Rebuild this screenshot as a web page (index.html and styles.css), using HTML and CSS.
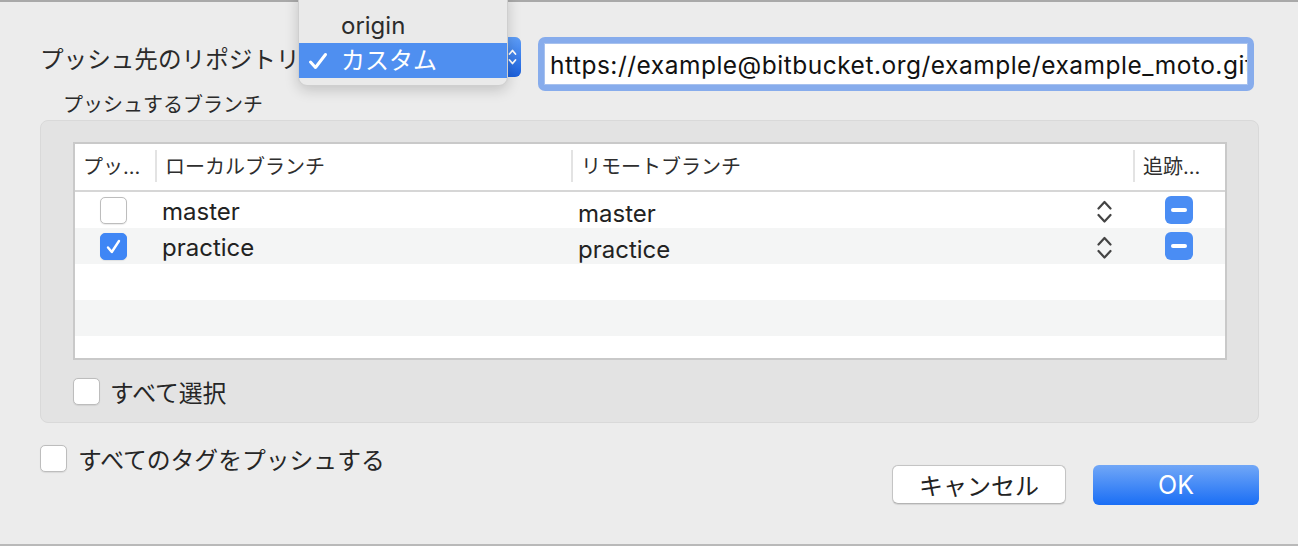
FILE: index.html
```html
<!DOCTYPE html>
<html lang="ja">
<head>
<meta charset="utf-8">
<title>プッシュ</title>
<link rel="stylesheet" href="styles.css">
</head>
<body>
<div class="window">
  <div class="top-row">
    <div class="repo-label">プッシュ先のリポジトリ:</div>
    <div class="popup-btn">
      <div class="popup-arrow">
        <svg width="9" height="18" viewBox="0 0 9 18"><path d="M1.5 6 L4.5 2.5 L7.5 6 M1.5 12 L4.5 15.5 L7.5 12" fill="none" stroke="#fff" stroke-width="1.8" stroke-linecap="round" stroke-linejoin="round"/></svg>
      </div>
    </div>
    <div class="url-ring">
      <div class="url-field">https://example@bitbucket.org/example/example_moto.git</div>
    </div>
  </div>

  <div class="menu">
    <div class="menu-item">origin</div>
    <div class="menu-item selected">
      <svg class="menu-check" width="20" height="20" viewBox="0 0 20 20"><path d="M2.5 11 L7.5 16.5 L17.5 3.5" fill="none" stroke="#fff" stroke-width="3" stroke-linecap="round" stroke-linejoin="round"/></svg>
      カスタム
    </div>
  </div>

  <div class="group-label">プッシュするブランチ</div>
  <div class="group">
    <div class="table">
      <div class="thead">
        <div class="th first">プッ…</div>
        <div class="th">ローカルブランチ</div>
        <div class="th">リモートブランチ</div>
        <div class="th">追跡…</div>
      </div>
      <div class="tbody">
        <div class="tr">
          <div class="td c1"><span class="cb"></span></div>
          <div class="td c2"><span class="txt">master</span></div>
          <div class="td c3"><span class="txt low">master</span>
            <svg class="stepper" width="15" height="25" viewBox="0 0 15 25"><path d="M1.5 9.5 L7.5 3 L13.5 9.5 M1.5 16 L7.5 22.5 L13.5 16" fill="none" stroke="#444" stroke-width="2.2" stroke-linecap="round" stroke-linejoin="round"/></svg>
          </div>
          <div class="td c4"><span class="minus"><span class="bar"></span></span></div>
        </div>
        <div class="tr alt">
          <div class="td c1"><span class="cb on"><svg width="25" height="25" viewBox="0 0 25 25"><path d="M7 13.5 L10.8 18 L18 7" fill="none" stroke="#fff" stroke-width="2.4" stroke-linecap="round" stroke-linejoin="round"/></svg></span></div>
          <div class="td c2"><span class="txt">practice</span></div>
          <div class="td c3"><span class="txt low">practice</span>
            <svg class="stepper" width="15" height="25" viewBox="0 0 15 25"><path d="M1.5 9.5 L7.5 3 L13.5 9.5 M1.5 16 L7.5 22.5 L13.5 16" fill="none" stroke="#444" stroke-width="2.2" stroke-linecap="round" stroke-linejoin="round"/></svg>
          </div>
          <div class="td c4"><span class="minus"><span class="bar"></span></span></div>
        </div>
        <div class="tr"></div>
        <div class="tr alt"></div>
        <div class="tr"></div>
      </div>
    </div>
    <div class="check-row select-all">
      <span class="cb"></span>
      <span>すべて選択</span>
    </div>
  </div>

  <div class="bottom">
    <div class="check-row tags">
      <span class="cb"></span>
      <span>すべてのタグをプッシュする</span>
    </div>
    <div class="buttons">
      <div class="btn cancel">キャンセル</div>
      <div class="btn ok">OK</div>
    </div>
  </div>
</div>
</body>
</html>
```

FILE: styles.css
```css
html, body {
  margin: 0;
  padding: 0;
  background: #ececec;
}

body {
  font-family: "Inter", "Noto Sans CJK JP", sans-serif;
  color: #262626;
  overflow: hidden;
}

.window {
  position: relative;
  box-sizing: border-box;
  width: 1298px;
  height: 546px;
  border-top: 2px solid #a9a9a9;
  border-bottom: 2px solid #b9b9b9;
  background: #ececec;
}

/* top row */
.top-row {
  display: flex;
  align-items: flex-start;
  padding: 35px 0 0 40px;
  height: 54px;
}

.repo-label {
  width: 262px;
  flex: none;
  height: 40px;
  margin-top: 3px;
  line-height: 40px;
  font-size: 23.6px;
  white-space: nowrap;
  color: #2a2a2a;
}

.popup-btn {
  box-sizing: border-box;
  width: 219px;
  height: 40px;
  display: flex;
  justify-content: flex-end;
  background: #fff;
  border: 1px solid #c6c6c6;
  border-radius: 6px;
}

.popup-arrow {
  width: 17px;
  margin: -1px -1px -1px 0;
  display: flex;
  align-items: center;
  justify-content: center;
  background: linear-gradient(#5e9ef8, #1b60dc);
  border-radius: 0 6px 6px 0;
}

.url-ring {
  box-sizing: border-box;
  margin-left: 17px;
  width: 716px;
  height: 54px;
  padding: 6px;
  background: #87acec;
  border-radius: 7px;
}

.url-field {
  box-sizing: border-box;
  height: 100%;
  background: #fff;
  border: 1px solid #a7c1ee;
  padding-left: 5px;
  padding-top: 1px;
  font-size: 24.5px;
  letter-spacing: 0.5px;
  line-height: 40px;
  color: #111;
  white-space: nowrap;
  overflow: hidden;
}

/* popup menu (overlay) */
.menu {
  position: absolute;
  left: 298px;
  top: -12px;
  box-sizing: border-box;
  width: 210px;
  height: 96px;
  padding: 17px 0 9px;
  background: #eaeaea;
  border: 1px solid #cfcfcf;
  border-radius: 9px;
  box-shadow: 0 4px 14px rgba(0, 0, 0, 0.18);
  z-index: 5;
}

.menu-item {
  position: relative;
  height: 35px;
  line-height: 35px;
  padding-left: 42px;
  font-size: 24px;
  color: #2c2c2c;
}

.menu-item.selected {
  background: #4f8ff0;
  color: #fff;
}

.menu-check {
  position: absolute;
  left: 9px;
  top: 8px;
}

/* group */
.group-label {
  height: 29px;
  line-height: 29px;
  padding-left: 63px;
  font-size: 20px;
  color: #2a2a2a;
}

.group {
  box-sizing: border-box;
  margin: 0 39px 0 40px;
  height: 303px;
  padding: 21px 31px 0 32px;
  background: #e3e3e3;
  border: 1px solid #d9d9d9;
  border-radius: 8px;
}

.table {
  box-sizing: border-box;
  height: 218px;
  background: #fff;
  border: 2px solid #c9c9c9;
  overflow: hidden;
}

.thead, .tr {
  display: grid;
  grid-template-columns: 80px 416px 562px 1fr;
}

.thead {
  height: 46px;
  border-bottom: 2px solid #d6d6d6;
}

.th {
  position: relative;
  padding-left: 10px;
  font-size: 20px;
  line-height: 46px;
  color: #2e2e2e;
  white-space: nowrap;
}

.th.first {
  padding-left: 8px;
}

.th:not(.first)::before {
  content: "";
  position: absolute;
  left: 0;
  top: 6px;
  bottom: 8px;
  width: 2px;
  background: #e3e3e3;
}

.tbody {
  height: 166px;
  overflow: hidden;
}

.tr {
  height: 36px;
  background: #fff;
}

.tr.alt {
  background: #f4f5f5;
}

.td {
  display: flex;
  align-items: center;
  font-size: 24px;
  color: #222;
}

.txt {
  padding-top: 3px;
}

.txt.low {
  padding-top: 6px;
}

.c1 {
  padding-left: 25px;
}

.c2 {
  padding-left: 7px;
}

.c3 {
  padding-left: 7px;
  padding-right: 21px;
  justify-content: space-between;
}

.stepper {
  margin-top: 3px;
}

.c4 {
  justify-content: center;
}

.minus {
  width: 28px;
  height: 28px;
  border-radius: 6px;
  background: #4a8df4;
  display: flex;
  align-items: center;
  justify-content: center;
}

.minus .bar {
  width: 16px;
  height: 4px;
  border-radius: 2px;
  background: #fff;
}

/* checkboxes */
.cb {
  box-sizing: border-box;
  display: inline-flex;
  align-items: center;
  justify-content: center;
  width: 27px;
  height: 27px;
  flex: none;
  background: #fff;
  border: 1px solid #bdbdbd;
  border-radius: 5px;
  box-shadow: 0 0.5px 1px rgba(0, 0, 0, 0.08);
}

.cb.on {
  background: #3f86f5;
  border-color: #3f86f5;
}

.check-row {
  display: flex;
  align-items: center;
  font-size: 23.8px;
  color: #262626;
}

.select-all {
  margin-top: 14px;
  gap: 10px;
}

/* bottom */
.bottom {
  display: flex;
  align-items: flex-start;
  padding: 0 39px 0 40px;
}

.tags {
  margin-top: 18px;
  gap: 11px;
}

.buttons {
  margin-left: auto;
  margin-top: 42px;
  display: flex;
  gap: 27px;
}

.btn {
  box-sizing: border-box;
  height: 39px;
  display: flex;
  align-items: center;
  justify-content: center;
  border-radius: 6px;
}

.cancel {
  width: 174px;
  background: #fff;
  border: 1px solid #c4c4c4;
  border-bottom-color: #b4b4b4;
  box-shadow: 0 0.5px 1px rgba(0, 0, 0, 0.1);
  font-size: 24px;
  color: #222;
}

.ok {
  width: 166px;
  height: 40px;
  background: linear-gradient(#71a7f7, #1a6ef5);
  color: #fff;
  font-size: 25px;
}
```
